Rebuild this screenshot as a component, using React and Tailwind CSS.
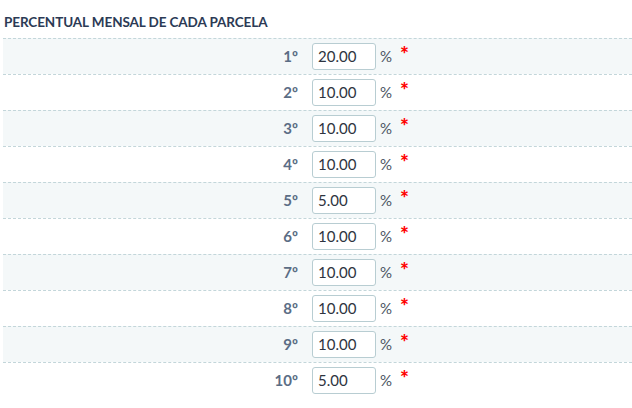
import React from "react";

const parcelas = [
  { n: "1º", value: "20.00" },
  { n: "2º", value: "10.00" },
  { n: "3º", value: "10.00" },
  { n: "4º", value: "10.00" },
  { n: "5º", value: "5.00" },
  { n: "6º", value: "10.00" },
  { n: "7º", value: "10.00" },
  { n: "8º", value: "10.00" },
  { n: "9º", value: "10.00" },
  { n: "10º", value: "5.00" },
];

export default function App() {
  return (
    <div className="w-[632px] h-[408px] bg-white overflow-hidden font-['Lato',sans-serif]">
      {/* Title */}
      <h3 className="pl-1 pt-[12px] h-[38px] text-[13.5px] font-bold text-[#2b3a55] tracking-[-0.1px]">
        PERCENTUAL MENSAL DE CADA PARCELA
      </h3>

      {/* Rows */}
      <div className="ml-[3px]">
        {parcelas.map((p, i) => (
          <div
            key={i}
            className={`flex items-center h-9 border-t border-dashed border-[#c3d6da] ${
              i % 2 === 0 ? "bg-[#f4f8f9]" : "bg-white"
            }`}
          >
            <div className="w-[297px] text-right pr-[2px] text-[15px] font-bold text-[#5b6d85]">
              {p.n}
            </div>
            <div className="ml-[12px] w-[64px] h-[27px] border border-[#b8cdd2] rounded-[3px] bg-white flex items-center pl-[5px] text-[15px] text-[#2e3440]">
              {p.value}
            </div>
            <span className="ml-[4px] text-[15px] text-[#4b5563]">%</span>
            <span className="ml-[8px] -mt-[6px] text-[21px] font-black text-[#ff0000] leading-none">
              *
            </span>
          </div>
        ))}
      </div>
    </div>
  );
}
